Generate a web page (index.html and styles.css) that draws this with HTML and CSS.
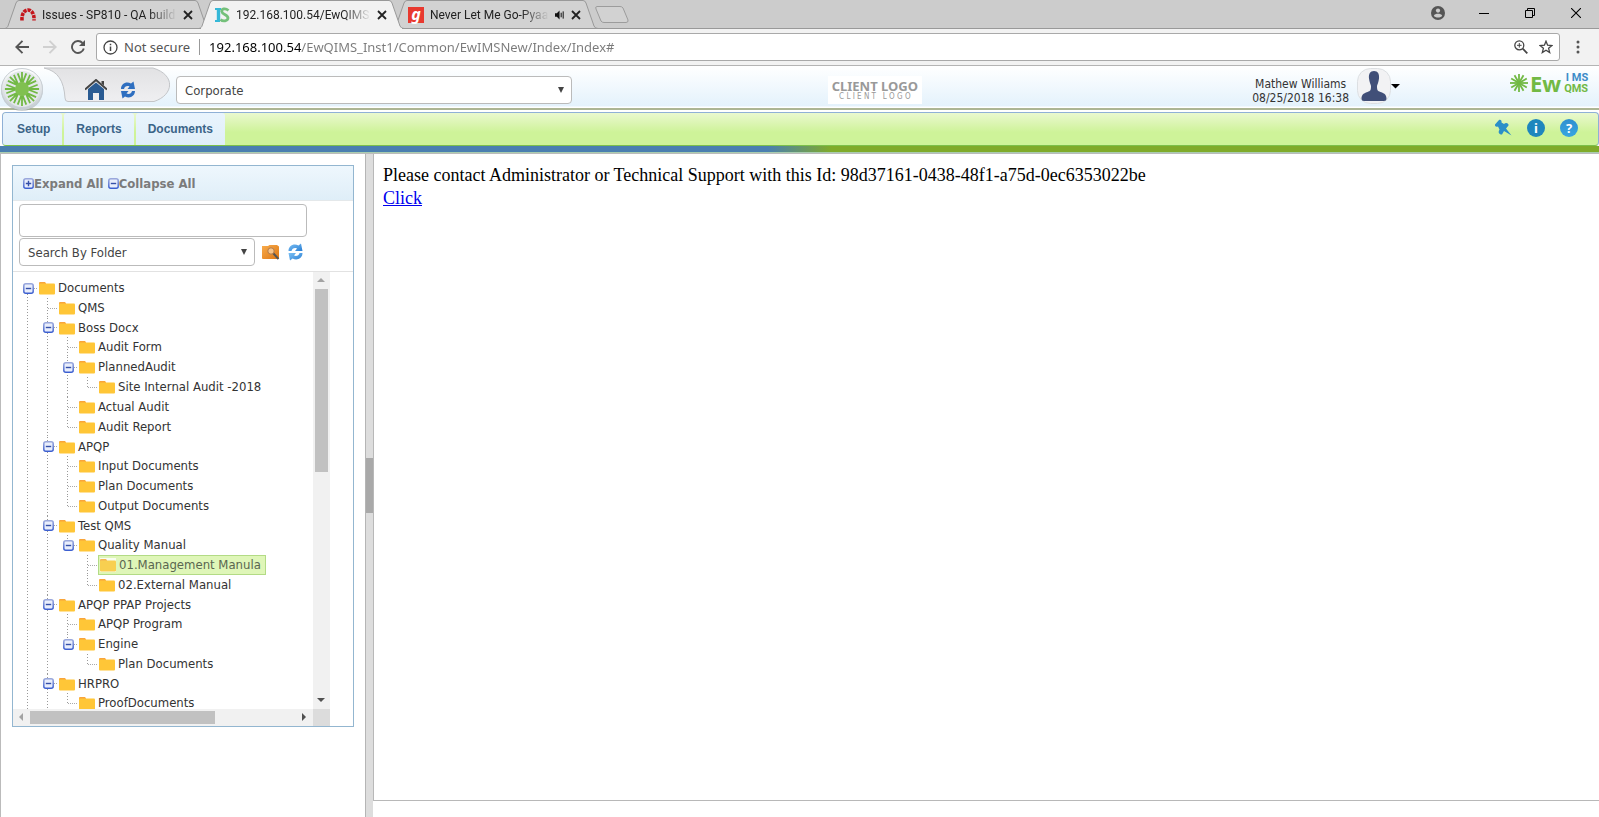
FILE: index.html
```html
<!DOCTYPE html>
<html lang="en">
<head>
<meta charset="utf-8">
<title>EwQIMS</title>
<link rel="stylesheet" href="styles.css">
</head>
<body>
<svg class="sprite" aria-hidden="true">
  <defs>
    <linearGradient id="gToggle" x1="0" y1="0" x2="0" y2="1"><stop offset="0" stop-color="#9aa8dc"/><stop offset="1" stop-color="#3c5fd0"/></linearGradient>
    <linearGradient id="gOrange" x1="0" y1="0" x2="1" y2="1"><stop offset="0" stop-color="#f9ac4c"/><stop offset="1" stop-color="#dd7714"/></linearGradient>
    <linearGradient id="gDisc" x1="0" y1="0" x2="0" y2="1"><stop offset="0" stop-color="#fdfdfd"/><stop offset="1" stop-color="#c4ccd2"/></linearGradient>
    <linearGradient id="gDock" x1="0" y1="0" x2="0" y2="1"><stop offset="0" stop-color="#e2e2e4"/><stop offset="1" stop-color="#efeff1"/></linearGradient>
    <linearGradient id="gSync" x1="0" y1="0" x2="1" y2="1"><stop offset="0" stop-color="#7cc0f4"/><stop offset="1" stop-color="#2a7fd4"/></linearGradient>
    <path id="ray" d="M0 0V-18M0 -5L-4.500 -16.500M0 -5L4.500 -16.500"/>
    <path id="spoke" d="M0 0V-18"/>
  </defs>
  <symbol id="folder" viewBox="0 0 16 14"><path d="M0 2.200Q0 1 1 1H6L7 2.200V4H0Z" fill="#f9a53a"/><rect y="2.500" width="16" height="11" rx="1" fill="#ffc637"/></symbol>
  <symbol id="minus" viewBox="0 0 11 11"><rect x=".8" y=".8" width="9.400" height="9.400" rx="2" fill="#e9eefc" stroke="url(#gToggle)" stroke-width="1.500"/><path d="M2.800 5.500H8.200" stroke="#3550a8" stroke-width="1.400"/></symbol>
  <symbol id="plus" viewBox="0 0 11 11"><rect x=".8" y=".8" width="9.400" height="9.400" rx="2" fill="#e9eefc" stroke="url(#gToggle)" stroke-width="1.500"/><path d="M2.800 5.500H8.200M5.500 2.800V8.200" stroke="#3550a8" stroke-width="1.400"/></symbol>
  <symbol id="cross" viewBox="0 0 10 10"><path d="M1 1L9 9M9 1L1 9" stroke="#222" stroke-width="1.800"/></symbol>
  <symbol id="tabshape" viewBox="0 0 205 29"><path d="M0 28.500C2 28 2.500 27 3 26L11 3Q12 .5 14 .5H190Q192 .5 193 3L201 26Q202 28.500 205 28.500Z"/></symbol>
  <symbol id="burst" viewBox="-20 -20 40 40">
    <use href="#ray"/><use href="#ray" transform="rotate(45)"/><use href="#ray" transform="rotate(90)"/><use href="#ray" transform="rotate(135)"/>
    <use href="#ray" transform="rotate(180)"/><use href="#ray" transform="rotate(225)"/><use href="#ray" transform="rotate(270)"/><use href="#ray" transform="rotate(315)"/>
  </symbol>
  <symbol id="star12" viewBox="-20 -20 40 40">
    <use href="#spoke"/><use href="#spoke" transform="rotate(30)"/><use href="#spoke" transform="rotate(60)"/><use href="#spoke" transform="rotate(90)"/>
    <use href="#spoke" transform="rotate(120)"/><use href="#spoke" transform="rotate(150)"/><use href="#spoke" transform="rotate(180)"/><use href="#spoke" transform="rotate(210)"/>
    <use href="#spoke" transform="rotate(240)"/><use href="#spoke" transform="rotate(270)"/><use href="#spoke" transform="rotate(300)"/><use href="#spoke" transform="rotate(330)"/>
  </symbol>
  <symbol id="sync" viewBox="0 0 16 18"><path d="M1 8C1 3 6 0 11 2.500L13.500 .5L15 8H7.500L9.500 5.500C7 4.500 4.500 5.500 4 8Z"/><path d="M15 10C15 15 10 18 5 15.500L2.500 17.500L1 10H8.500L6.500 12.500C9 13.500 11.500 12.500 12 10Z"/></symbol>
</svg>

<header class="browser">
  <div class="tabstrip">
    <div class="tab">
      <svg class="tab-shape"><use href="#tabshape"/></svg>
      <svg class="favicon" viewBox="0 0 16 16"><path d="M2 13.500C1.500 6 5 3 8 3S14.500 6 14 13.500" fill="none" stroke="#c4161c" stroke-width="3.600" stroke-dasharray="3.400 .9"/></svg>
      <span class="tab-title">Issues - SP810 - QA build</span>
      <button class="tab-close" aria-label="Close tab"><svg><use href="#cross"/></svg></button>
    </div>
    <div class="tab tab-active">
      <svg class="tab-shape"><use href="#tabshape"/></svg>
      <svg class="favicon" viewBox="0 0 16 16"><path d="M1 2H7M1 14H6" stroke="#35b8d8" stroke-width="2.200"/><path d="M4.500 2V14" stroke="#35b8d8" stroke-width="3.400"/><path d="M14.500 3.500C11 .5 7.500 2 7.800 4.500C8 7.500 14 7.500 14 11C13.800 14 9 15 6.500 12.500" fill="none" stroke="#74c07a" stroke-width="2.800"/></svg>
      <span class="tab-title">192.168.100.54/EwQIMS_</span>
      <button class="tab-close" aria-label="Close tab"><svg><use href="#cross"/></svg></button>
    </div>
    <div class="tab">
      <svg class="tab-shape"><use href="#tabshape"/></svg>
      <span class="favicon gaana">g</span>
      <span class="tab-title">Never Let Me Go-Pyaa</span>
      <svg class="speaker" viewBox="0 0 11 10"><path d="M0 3H2L5 0V10L2 7H0Z" fill="#111"/><path d="M6.800 2.500V7.500M9 1V9" stroke="#111" stroke-width="1.100"/></svg>
      <button class="tab-close" aria-label="Close tab"><svg><use href="#cross"/></svg></button>
    </div>
    <button class="newtab" aria-label="New tab"><svg viewBox="0 0 34 17"><path d="M2 .5H25Q27 .5 28 2L33 14Q33.500 16.500 31 16.500H9Q7 16.500 6 15L1 3Q0 .5 2 .5Z" fill="#d2d2d2" stroke="#9c9c9c"/></svg></button>
    <div class="window-buttons">
      <button aria-label="Account"><svg width="14" height="14" viewBox="0 0 14 14"><circle cx="7" cy="7" r="7" fill="#555"/><circle cx="7" cy="4.600" r="2.100" fill="#ccc"/><path d="M2.800 9.800C4 7.200 10 7.200 11.200 9.800C10 12.200 4 12.200 2.800 9.800Z" fill="#ccc"/></svg></button>
      <button aria-label="Minimize"><svg width="10" height="10" viewBox="0 0 10 10"><path d="M0 5.500H10" stroke="#000"/></svg></button>
      <button aria-label="Restore"><svg width="10" height="10" viewBox="0 0 10 10"><path d="M.5 2.500H7.500V9.500H.5ZM2.500 2.500V.5H9.500V7.500H7.500" fill="none" stroke="#000"/></svg></button>
      <button aria-label="Close"><svg width="10" height="10" viewBox="0 0 10 10"><path d="M0 0L10 10M10 0L0 10" stroke="#000" stroke-width="1.100"/></svg></button>
    </div>
  </div>
  <div class="toolbar">
    <button class="tool" aria-label="Back"><svg width="14" height="14" viewBox="0 0 14 14"><path d="M7.500 .8L1.300 7L7.500 13.200M1.500 7H14" fill="none" stroke="#555" stroke-width="1.900"/></svg></button>
    <button class="tool" aria-label="Forward"><svg width="14" height="14" viewBox="0 0 14 14"><path d="M6.500 .8L12.700 7L6.500 13.200M12.500 7H0" fill="none" stroke="#d0d0d0" stroke-width="1.900"/></svg></button>
    <button class="tool" aria-label="Reload"><svg width="14" height="14" viewBox="0 0 14 14"><path d="M11.500 3A6 6 0 1 0 12.800 8.500" fill="none" stroke="#555" stroke-width="1.900"/><path d="M14 0V6H8Z" fill="#555"/></svg></button>
    <div class="omnibox">
      <svg width="15" height="15" viewBox="0 0 15 15"><circle cx="7.500" cy="7.500" r="6.500" fill="none" stroke="#444" stroke-width="1.300"/><path d="M7.500 6.500V11M7.500 3.800V5.300" stroke="#444" stroke-width="1.500"/></svg>
      <span class="secure">Not secure</span>
      <input class="url" aria-label="Address" value="192.168.100.54/EwQIMS_Inst1/Common/EwIMSNew/Index/Index#">
      <button class="omni-btn" aria-label="Zoom"><svg width="14" height="14" viewBox="0 0 14 14"><circle cx="5.300" cy="5.300" r="4.500" fill="none" stroke="#444" stroke-width="1.300"/><path d="M8.700 8.700L13.300 13.300" stroke="#444" stroke-width="1.800"/><path d="M3 5.300H7.600M5.300 3V7.600" stroke="#444"/></svg></button>
      <button class="omni-btn" aria-label="Bookmark"><svg width="14" height="14" viewBox="0 0 14 14"><path d="M7 1.200L8.600 5.200L12.900 5.500L9.600 8.300L10.700 12.500L7 10.200L3.300 12.500L4.400 8.300L1.100 5.500L5.400 5.200Z" fill="none" stroke="#444" stroke-width="1.300"/></svg></button>
    </div>
    <button class="tool" aria-label="Menu"><svg width="4" height="14" viewBox="0 0 4 14"><circle cx="2" cy="2" r="1.500" fill="#555"/><circle cx="2" cy="7" r="1.500" fill="#555"/><circle cx="2" cy="12" r="1.500" fill="#555"/></svg></button>
  </div>
</header>

<div class="apphead">
  <svg class="orb" viewBox="0 0 44 44"><circle cx="22" cy="23" r="21" fill="#9aa3a8" opacity=".5"/><circle cx="22" cy="22" r="20.500" fill="url(#gDisc)" stroke="#c9cfd4"/><circle cx="22" cy="22" r="18" fill="#e3e7ea"/><use href="#burst" x="3" y="3" width="38" height="38" stroke="#72b944" stroke-width="1.900" fill="none"/><circle cx="22" cy="22" r="7" fill="#80c050"/></svg>
  <div class="dock">
    <svg class="dock-shape" viewBox="0 0 126 36"><path d="M0 1H109C132 8 130 28 110 34.500H24Q21 34.500 21 31C20 14 14 4 0 1Z" fill="url(#gDock)" stroke="#c3c5c8"/></svg>
    <a href="#" aria-label="Home"><svg width="22" height="22" viewBox="0 0 22 22"><path d="M3 10L11 3.500L19 10V21H14V14H8V21H3Z" fill="#2a5b92"/><path d="M0 10.500L11 1L22 10.500" fill="none" stroke="#444" stroke-width="2"/><path d="M16.500 2H19V6.500L16.500 4.500Z" fill="#444"/></svg></a>
    <a href="#" aria-label="Refresh"><svg width="16" height="18" fill="#2f6fc0"><use href="#sync"/></svg></a>
  </div>
  <select class="box site" aria-label="Site"><option>Corporate</option></select>
  <div class="client"><b>CLIENT LOGO</b><span>C L I E N T &nbsp; L O G O</span></div>
  <div class="user">
    <div class="user-text">Mathew Williams<br>08/25/2018 16:38</div>
    <button class="avatar" aria-label="User menu">
      <svg width="34" height="36" viewBox="0 0 34 36"><rect x=".5" y=".5" width="33" height="35" rx="13" fill="#f2f2f4" stroke="#dcdfe2"/><path d="M17 3C21 3 22.500 6 22 10.500C21.500 14.500 20.500 16 20 18C20 22 20.500 23 23.500 24C28 25.500 29.500 27 29.500 31Q29.500 33 27 33H7Q4.500 33 4.500 31C4.500 27 6 25.500 10.500 24C13.500 23 14 22 14 18C13.500 16 12.500 14.500 12 10.500C11.500 6 13 3 17 3Z" fill="#414f78"/></svg>
      <svg width="9" height="5" viewBox="0 0 9 5"><path d="M0 0H9L4.500 4.500Z" fill="#000"/></svg>
    </button>
  </div>
  <div class="brand">
    <svg width="20" height="20" viewBox="0 0 20 20" stroke="#72b944"><use href="#star12" width="20" height="20" stroke-width="3.600"/></svg>
    <span class="brand-ew">Ew</span>
    <span class="brand-stack"><b>I MS</b><b class="green">QMS</b></span>
  </div>
</div>

<nav class="menubar">
  <a href="#">Setup</a><a href="#">Reports</a><a href="#">Documents</a>
  <div class="menu-icons">
    <button aria-label="Pin"><svg width="18" height="18" viewBox="0 0 18 18"><path d="M5 1C6.500 .3 8 1.500 7.500 3.500L10 5C12 3 15 4.500 14.500 6.500L12 9.500L17.500 16.500L10 12L8 15.500C4.500 15.500 4 13 5.500 10.500L4 7.500C2 8.500 .5 7 1 5.500Z" fill="#2b8fc8"/></svg></button>
    <button class="disc" aria-label="Information">i</button>
    <button class="disc help" aria-label="Help">?</button>
  </div>
</nav>
<div class="stripe"></div>

<main class="workspace">
  <aside class="side">
    <section class="panel">
      <div class="panel-head">
        <button><svg><use href="#plus"/></svg>Expand All</button>
        <button><svg><use href="#minus"/></svg>Collapse All</button>
      </div>
      <form class="search">
        <input class="box query" type="text" aria-label="Search text">
        <div class="search-row">
          <select class="box mode" aria-label="Search mode"><option>Search By Folder</option></select>
          <button type="button" aria-label="Search"><svg width="18" height="16" viewBox="0 0 18 16"><path d="M0 2H6L7.500 1H15L17 2.500V14Q17 15 16 15H1Q0 15 0 14Z" fill="url(#gOrange)"/><circle cx="9" cy="7" r="3.200" fill="#f7c48a" stroke="#b07a4a"/><path d="M11.500 9.500L16.500 15" stroke="#555" stroke-width="2"/></svg></button>
          <button type="button" aria-label="Refresh"><svg width="17" height="18" viewBox="0 0 16 18" fill="url(#gSync)"><use href="#sync" width="16" height="18"/></svg></button>
        </div>
      </form>
      <div class="tree-pane">
        <div class="tree-view" id="tree"></div>
        <div class="vbar"><i class="arrow up"></i><i class="thumb"></i><i class="arrow down"></i></div>
        <div class="hbar"><i class="arrow left"></i><i class="thumb"></i><i class="arrow right"></i></div>
        <div class="corner"></div>
      </div>
    </section>
  </aside>
  <div class="splitter"><i></i></div>
  <article class="frame">
    Please contact Administrator or Technical Support with this Id: 98d37161-0438-48f1-a75d-0ec6353022be<br>
    <a href="#">Click</a>
  </article>
</main>
<script src="tree.js"></script>
</body>
</html>
```
FILE: styles.css
```css
* { box-sizing: border-box; }
body {
  margin: 0;
  height: 100vh;
  display: flex;
  flex-direction: column;
  overflow: hidden;
  background: #fff;
  font: 13px/20px "DejaVu Sans Condensed", "DejaVu Sans", sans-serif;
  color: #333;
}
button { margin: 0; padding: 0; border: 0; background: none; font: inherit; color: inherit; }
svg { display: block; }
.sprite { position: absolute; width: 0; height: 0; }

/* browser chrome */
.browser { flex: none; font: 13px/18px "Noto Sans", sans-serif; }
.tabstrip { display: flex; height: 29px; padding-left: 5px; background: #ccc; box-shadow: inset 0 -1px #999; }
.tab {
  position: relative;
  flex: none;
  display: flex;
  align-items: center;
  gap: 6px;
  width: 205px;
  margin-right: -11px;
  padding: 0 17px 0 15px;
  font: 12px/18px Roboto, "Noto Sans", sans-serif;
  color: #222;
}
.tab > * { position: relative; flex: none; }
.tab > .tab-shape { position: absolute; left: 0; top: 0; width: 205px; height: 29px; fill: #d2d2d2; stroke: #999; }
.tab-active { z-index: 1; }
.tab-active::after { content: ""; position: absolute; left: 2px; right: 2px; bottom: 0; height: 1px; background: #f2f2f2; }
.tab-active > .tab-shape { fill: #f2f2f2; }
.favicon { width: 16px; height: 16px; }
.gaana { background: #e8392f; color: #fff; font: italic bold 16px/14px "Noto Sans", sans-serif; text-align: center; }
.tab > .tab-title {
  flex: 1 1 0;
  overflow: hidden;
  white-space: nowrap;
  -webkit-mask-image: linear-gradient(to left, transparent, #000 28px);
  mask-image: linear-gradient(to left, transparent, #000 28px);
}
.tab-close svg { width: 10px; height: 10px; }
.speaker { width: 10px; height: 10px; }
.newtab { width: 34px; margin-left: 8px; }
.newtab svg { width: 34px; height: 17px; }
.window-buttons { display: flex; height: 26px; margin-left: auto; }
.window-buttons button { width: 46px; display: grid; place-items: center; }
.toolbar { display: flex; align-items: center; height: 37px; padding: 0 13px 0 8px; background: #f2f2f2; border-bottom: 1px solid #b4b4b4; }
.tool { flex: none; width: 28px; height: 28px; display: grid; place-items: center; }
.toolbar > .tool:last-child { width: 16px; margin-left: 10px; }
.omnibox { flex: 1; display: flex; align-items: center; height: 28px; margin-left: 4px; padding: 0 6px; background: #fff; border: 1px solid #a9a9a9; border-radius: 3px; }
.secure { margin-left: 6px; padding-right: 9px; border-right: 1px solid #999; color: #555; line-height: 16px; }
.url {
  flex: 1;
  min-width: 0;
  margin-left: 9px;
  padding: 0;
  border: 0;
  font: inherit;
  color: transparent;
  background: linear-gradient(to right, #000 92px, #7a7a7a 92px);
  -webkit-background-clip: text;
  background-clip: text;
}
.omni-btn { margin-left: 11px; }

/* application header */
.apphead {
  flex: none;
  display: flex;
  align-items: flex-start;
  height: 44px;
  background: linear-gradient(#fff, #e4f2fc 40px, #fff 41px);
  border-bottom: 2px solid #acb594;
}
.orb { position: relative; flex: none; width: 44px; height: 44px; margin-top: 1px; }
.dock { position: relative; flex: none; display: flex; align-items: center; gap: 13px; width: 126px; height: 36px; margin-top: 1px; padding: 10px 0 0 41px; }
.dock a { position: relative; }
.dock-shape { position: absolute; left: 0; top: 0; width: 126px; height: 36px; }
.box {
  appearance: none;
  -webkit-appearance: none;
  margin: 0;
  padding: 2px 8px 0;
  border: 1px solid #bbb;
  border-radius: 4px;
  background-color: #fff;
  font: inherit;
  color: #444;
}
select.box {
  height: 28px;
  background: #fff url("data:image/svg+xml,%3Csvg xmlns='http://www.w3.org/2000/svg' width='6' height='6'%3E%3Cpath d='M0 0H6L3 6Z' fill='%23444'/%3E%3C/svg%3E") no-repeat right 7px center;
}
.site { flex: none; width: 396px; margin: 10px 0 0 6px; }
.client {
  flex: none;
  width: 94px;
  height: 28px;
  margin: 10px 0 0 16vw;
  padding-top: 3px;
  background: #fff;
  color: #999;
  text-align: center;
  white-space: nowrap;
  font: 8px/8px "DejaVu Sans Condensed", sans-serif;
}
.client b { display: block; font: bold 13px/14px "Noto Sans", sans-serif; }
.user { display: flex; align-items: flex-start; gap: 8px; margin: 0 109px 0 auto; }
.user-text { margin-top: 11px; text-align: center; font-size: 12px; line-height: 14px; }
.avatar { display: flex; align-items: center; margin-top: 2px; }
.brand { flex: none; display: flex; align-items: center; width: 90px; margin-top: 5px; color: #72b944; white-space: nowrap; }
.brand-ew { margin: 0 3px 0 1px; font: bold 22px/24px "Noto Sans", sans-serif; }
.brand-stack b { display: block; text-align: right; color: #3d8cc8; font: bold 11px/11px Roboto, sans-serif; }
.brand-stack .green { color: #72b944; }

/* menu bar */
.menubar {
  flex: none;
  display: flex;
  gap: 2px;
  height: 34px;
  margin: 2px 0 0 2px;
  overflow: hidden;
  border: 1px solid #8fb0d6;
  border-bottom-color: #7cc04a;
  border-radius: 4px;
  background: linear-gradient(#eaf8cf, #cef399 60%);
  font: bold 12px/32px "Liberation Sans", Arial, sans-serif;
}
.menubar > a { padding: 0 12px; border-radius: 3px 3px 0 0; background: linear-gradient(#e9f4fd, #e0eef9); color: #3b6488; text-decoration: none; }
.menubar > a:first-child { padding-left: 14px; }
.menu-icons { display: flex; align-items: center; gap: 15px; margin: 0 20px 0 auto; padding-bottom: 2px; }
.disc { width: 18px; height: 18px; border-radius: 50%; background: #1f86bd; color: #fff; font: bold 13px/18px "Noto Sans", sans-serif; text-align: center; }
.help { background: linear-gradient(#2f8fd0, #37a6e0); }
.stripe {
  flex: none;
  height: 7px;
  border-bottom: 1px solid #a9cdb0;
  background: linear-gradient(to right, #4a7fb0 48%, #80ab2a 52%);
}

/* workspace */
.workspace { flex: 1; min-height: 0; display: flex; border-top: 1px solid #bbb; }
.side { flex: none; width: 365px; padding: 11px 11px 0; border-left: 1px solid #bbb; }
.panel { width: 342px; border: 1px solid #93b6d0; }
.panel-head { display: flex; gap: 4px; height: 35px; padding: 1px 0 0 10px; border-bottom: 1px solid #e4e8ea; background: linear-gradient(#eef7fd, #dfeef8); font-weight: bold; color: #7b7b7b; }
.panel-head button { display: flex; align-items: center; }
.panel-head svg { width: 11px; height: 11px; }
.search { padding: 3px 6px 5px; border-bottom: 1px solid #e2e2e2; }
.query { display: block; width: 288px; height: 33px; }
.search-row { display: flex; align-items: center; gap: 7px; margin-top: 1px; }
.mode { width: 236px; }
.tree-pane { display: grid; grid-template: 437px 17px / 300px 17px; }
.tree-view { overflow: hidden; padding: 6px 0 0 10px; }
.tree-view ul { margin: 0; padding: 0 0 0 20px; list-style: none; }
.tree-view > ul { padding: 0; }
.tree-view li {
  background: repeating-linear-gradient(#999 0 1px, transparent 1px 3px) no-repeat 4px 0 / 1px 100%;
}
.tree-view li:last-child { background-size: 1px 10px; }
.tree-view li.more { background-size: 1px 100%; }
.tree-view > ul > li.more { background-position: 4px 10px; }
.row { display: flex; align-items: center; height: 20px; }
.row-group { height: 19px; }
.row button, .stub { flex: none; width: 16px; height: 11px; background: repeating-linear-gradient(to right, #aaa 0 1px, transparent 1px 2px) no-repeat 5px 5px / 10px 1px; }
.row button svg { width: 11px; height: 11px; }
.row a { display: flex; align-items: center; gap: 3px; color: #333; text-decoration: none; white-space: nowrap; }
.row a svg { width: 16px; height: 14px; }
.row a.selected { margin-left: -1px; padding: 0 4px 0 1px; border: 1px solid #b3db85; background: #dff6b8; color: #5a6650; line-height: 18px; }
.selected svg { background: #fff; opacity: .8; }
.vbar, .hbar { display: flex; align-items: center; background: #f1f1f1; }
.vbar { flex-direction: column; }
.arrow { flex: none; width: 17px; height: 17px; background: #a3a3a3; }
.up { clip-path: polygon(8px 6px, 12px 10px, 4px 10px); }
.down { clip-path: polygon(4px 6px, 12px 6px, 8px 10px); margin-top: auto; background: #505050; }
.left { clip-path: polygon(6px 8px, 10px 4px, 10px 12px); }
.right { clip-path: polygon(10px 8px, 6px 4px, 6px 12px); margin-left: auto; background: #505050; }
.thumb { background: #c1c1c1; }
.vbar .thumb { width: 13px; height: 183px; }
.hbar .thumb { width: 185px; height: 13px; }
.corner { background: #dcdcdc; }
.splitter { flex: none; display: flex; align-items: center; width: 8px; border-left: 1px solid #b5b5b5; background: #ddd; }
.splitter i { width: 7px; height: 55px; background: #a9a9a9; }
.frame {
  flex: 1;
  margin-bottom: 16px;
  padding: 10px 9px;
  border: solid #b8b8b8;
  border-width: 0 0 1px 1px;
  font: 18px/23px "Liberation Serif", serif;
  color: #000;
}
.frame a { color: #00e; }
```
FILE: tree.js
```js
const data = ['Documents', [
  ['QMS'],
  ['Boss Docx', [
    ['Audit Form'],
    ['PlannedAudit', [['Site Internal Audit -2018']]],
    ['Actual Audit'],
    ['Audit Report']
  ]],
  ['APQP', [['Input Documents'], ['Plan Documents'], ['Output Documents']]],
  ['Test QMS', [
    ['Quality Manual', [['01.Management Manula'], ['02.External Manual']]]
  ]],
  ['APQP PPAP Projects', [
    ['APQP Program'],
    ['Engine', [['Plan Documents']]]
  ]],
  ['HRPRO', [['ProofDocuments']]]
]];
const selected = '01.Management Manula';
const more = ['Documents', 'HRPRO'];

function render([name, children], depth) {
  const handle = children
    ? `<button aria-label="Collapse ${name}"><svg><use href="#minus"/></svg></button>`
    : '<span class="stub"></span>';
  const group = children && depth === 1 ? ' row-group' : '';
  const mark = name === selected ? ' class="selected"' : '';
  const open = more.includes(name) ? ' class="more"' : '';
  const nested = children
    ? `<ul>${children.map(child => render(child, depth + 1)).join('')}</ul>`
    : '';
  return `<li${open}><div class="row${group}">${handle}<a href="#"${mark}><svg><use href="#folder"/></svg>${name}</a></div>${nested}</li>`;
}

document.getElementById('tree').innerHTML = `<ul>${render(data, 0)}</ul>`;
```
